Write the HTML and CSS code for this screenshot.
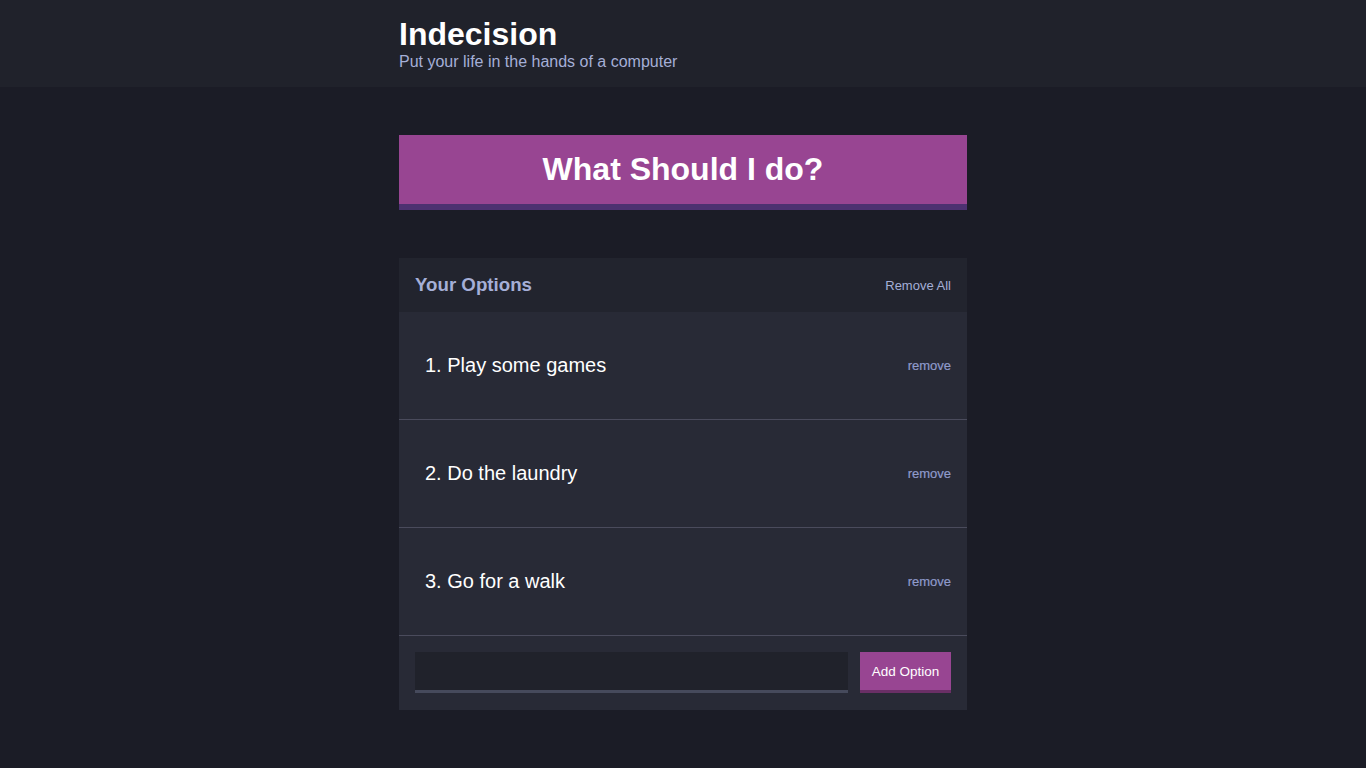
FILE: index.html
```html
<!DOCTYPE html>
<html lang="en">
<head>
<meta charset="utf-8">
<title>Indecision</title>
<link rel="stylesheet" href="styles.css">
</head>
<body>
<header class="header">
  <div class="container">
    <h1 class="header__title">Indecision</h1>
    <h2 class="header__subtitle">Put your life in the hands of a computer</h2>
  </div>
</header>
<main class="container">
  <button class="big-button">What Should I do?</button>
  <section class="widget">
    <div class="widget-header">
      <h3 class="widget-header__title">Your Options</h3>
      <button class="button--link">Remove All</button>
    </div>
    <div class="option">
      <p class="option__text">1. Play some games</p>
      <button class="button--link button--small">remove</button>
    </div>
    <div class="option">
      <p class="option__text">2. Do the laundry</p>
      <button class="button--link button--small">remove</button>
    </div>
    <div class="option">
      <p class="option__text">3. Go for a walk</p>
      <button class="button--link button--small">remove</button>
    </div>
    <form class="add-option">
      <input class="add-option__input" type="text" name="option">
      <button class="button" type="button">Add Option</button>
    </form>
  </section>
</main>
</body>
</html>
```
FILE: styles.css
```css
* { box-sizing: border-box; }
html, body { margin: 0; padding: 0; }
body {
  background: #1b1c26;
  font-family: "Liberation Sans", Arial, sans-serif;
  color: #ffffff;
  min-height: 768px;
}
.container {
  width: 568px;
  margin: 0 auto;
}
.header {
  background: #20222b;
  height: 87px;
  padding-top: 16px;
  margin-bottom: 48px;
}
.header__title {
  margin: 0;
  font-size: 32px;
  line-height: 36px;
  font-weight: bold;
  color: #ffffff;
}
.header__subtitle {
  margin: 0;
  font-size: 16px;
  line-height: 20px;
  font-weight: normal;
  color: #a5afd7;
}
.big-button {
  display: block;
  width: 100%;
  height: 75px;
  background: #984592;
  border: none;
  border-bottom: 6px solid #4d3171;
  color: #ffffff;
  font-family: inherit;
  font-weight: bold;
  font-size: 32px;
  padding: 0;
  margin: 0 0 48px;
}
.widget {
  background: #282a36;
}
.widget-header {
  display: flex;
  justify-content: space-between;
  align-items: center;
  background: #22242e;
  height: 54px;
  padding: 0 16px;
}
.widget-header__title {
  margin: 0;
  font-size: 18.7px;
  font-weight: bold;
  color: #a5afd7;
}
.button--link {
  background: none;
  border: none;
  padding: 0;
  font-family: inherit;
  font-size: 13px;
  color: #a5afd7;
}
.button--small {
  font-size: 13px;
  font-weight: normal;
  color: #8f9acb;
  -webkit-text-stroke: 0.2px #8f9acb;
}
.option {
  display: flex;
  justify-content: space-between;
  align-items: center;
  height: 108px;
  padding: 0 16px 0 26px;
  border-bottom: 1px solid #4a4b5c;
}
.option__text {
  margin: 0;
  font-size: 20px;
  color: #ffffff;
}
.add-option {
  display: flex;
  align-items: stretch;
  gap: 12px;
  padding: 16px 16px 17px;
}
.add-option__input {
  flex: 1;
  height: 41px;
  background: #20222b;
  border: none;
  border-bottom: 3px solid #464a5c;
  color: #a5afd7;
  font-family: inherit;
  outline: none;
}
.button {
  width: 91px;
  height: 41px;
  background: #984592;
  border: none;
  border-bottom: 3px solid #6a2f66;
  color: #ffffff;
  font-family: inherit;
  font-size: 13.5px;
  padding: 0;
}
```
